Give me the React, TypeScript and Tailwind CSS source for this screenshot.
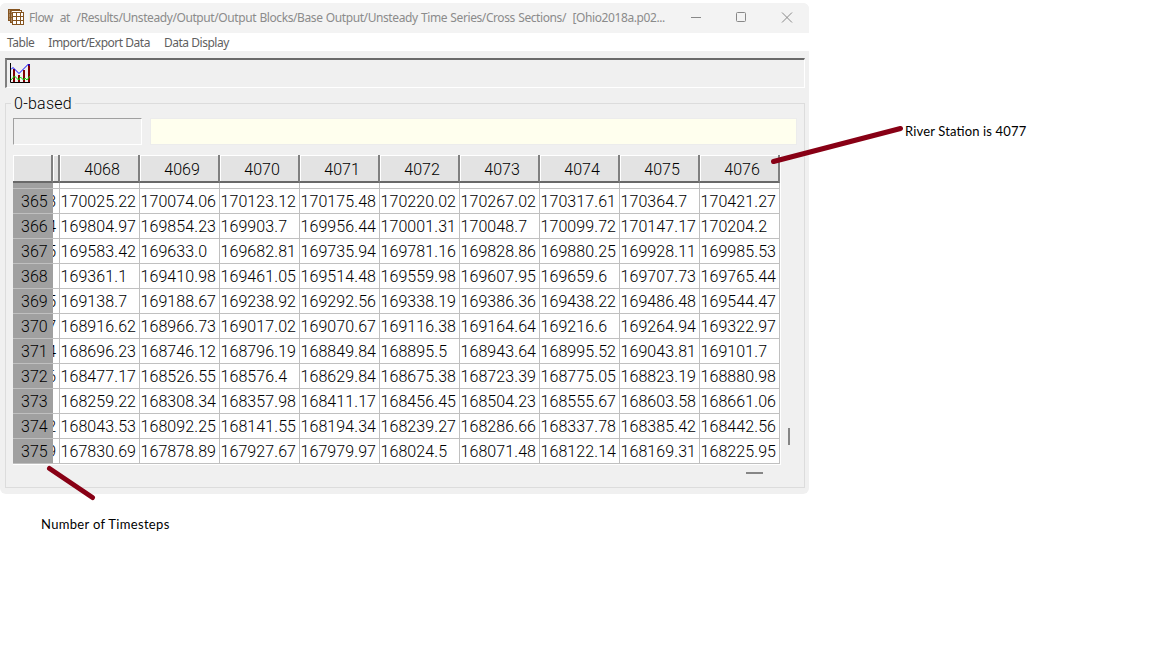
const columns = [4068, 4069, 4070, 4071, 4072, 4073, 4074, 4075, 4076];

// `clipped` is the last digit of the column scrolled under the row header
const rows = [
	{ step: 365, clipped: "3", values: ["170025.22", "170074.06", "170123.12", "170175.48", "170220.02", "170267.02", "170317.61", "170364.7", "170421.27"] },
	{ step: 366, clipped: "4", values: ["169804.97", "169854.23", "169903.7", "169956.44", "170001.31", "170048.7", "170099.72", "170147.17", "170204.2"] },
	{ step: 367, clipped: "5", values: ["169583.42", "169633.0", "169682.81", "169735.94", "169781.16", "169828.86", "169880.25", "169928.11", "169985.53"] },
	{ step: 368, clipped: "", values: ["169361.1", "169410.98", "169461.05", "169514.48", "169559.98", "169607.95", "169659.6", "169707.73", "169765.44"] },
	{ step: 369, clipped: "5", values: ["169138.7", "169188.67", "169238.92", "169292.56", "169338.19", "169386.36", "169438.22", "169486.48", "169544.47"] },
	{ step: 370, clipped: "7", values: ["168916.62", "168966.73", "169017.02", "169070.67", "169116.38", "169164.64", "169216.6", "169264.94", "169322.97"] },
	{ step: 371, clipped: "4", values: ["168696.23", "168746.12", "168796.19", "168849.84", "168895.5", "168943.64", "168995.52", "169043.81", "169101.7"] },
	{ step: 372, clipped: "6", values: ["168477.17", "168526.55", "168576.4", "168629.84", "168675.38", "168723.39", "168775.05", "168823.19", "168880.98"] },
	{ step: 373, clipped: "", values: ["168259.22", "168308.34", "168357.98", "168411.17", "168456.45", "168504.23", "168555.67", "168603.58", "168661.06"] },
	{ step: 374, clipped: "2", values: ["168043.53", "168092.25", "168141.55", "168194.34", "168239.27", "168286.66", "168337.78", "168385.42", "168442.56"] },
	{ step: 375, clipped: "9", values: ["167830.69", "167878.89", "167927.67", "167979.97", "168024.5", "168071.48", "168122.14", "168169.31", "168225.95"] },
];

const TableIcon = () => (
	<svg className="mb-[2px] ml-2 h-[16px] w-[16px] shrink-0" viewBox="0 0 16 16" fill="#fff" stroke="#855420">
		<rect x="0.5" y="0.5" width="11" height="11" />
		<rect x="2.5" y="1.5" width="11" height="12" />
		<rect x="4.5" y="3.5" width="11" height="12" />
		<path d="M8.500 4v11M12.500 4v11M5 7.500h10M5 11.500h10" fill="none" />
		<path d="M1.500 1v10M3.500 2v11M1 4.500h3M1 8.500h3" fill="none" strokeOpacity="0.7" />
	</svg>
);

const ChartIcon = () => (
	<svg className="ml-[3px] mt-[3px] h-[20px] w-[20px]" viewBox="0 0 20 20" fill="none">
		<path d="M4 6v13M9 12v7M14 7v12M19 1v18" stroke="#800000" strokeWidth="2" />
		<path d="M1 6.500l2-2 6 6 9.500-9.500 1.500 2" stroke="#0000ff" />
		<path d="M1 17l3.500-4 4 4 2-3 3 3 1.500-2 2 2 3-4" stroke="#00e000" />
		<path d="M.5 0v19.500H20" stroke="#000" />
	</svg>
);

const TitleBar = () => (
	<div className="flex h-[30px] items-center bg-[#f3f3f3]">
		<TableIcon />
		<span className="ml-[5px] w-[654px] shrink-0 whitespace-pre font-['Noto_Sans'] text-[12px] tracking-[-0.41px] text-[#8b8b8b] [word-spacing:0.6px]">
			{"Flow  at  /Results/Unsteady/Output/Output Blocks/Base Output/Unsteady Time Series/Cross Sections/  [Ohio2018a.p02..."}
		</span>
		<svg className="mt-[-2px] h-[12px] w-[112px] shrink-0" viewBox="0 0 112 12" fill="none" stroke="#888">
			<path d="M8 6.500h10M99 1.500l10 10M109 1.500l-10 10" />
			<rect x="53.5" y="1.5" width="9" height="9" rx="1" />
		</svg>
	</div>
);

const HeaderCell = ({ label }: { label: number }) => (
	<div className="flex h-[28px] w-20 items-center justify-center border-b-2 border-r-2 border-b-[#696969] border-r-[#808080] bg-[#e3e3e3] pl-[6px] pt-1 shadow-[inset_1px_1px_0_#fff]">
		{label}
	</div>
);

const DataTable = () => (
	<div className="ml-[7px] mt-[10px] w-[768px] border-b border-r border-b-white border-r-white bg-white font-[Roboto] text-[16px] font-light leading-[26px] text-black">
		<div className="flex">
			<div className="h-[28px] w-10 border-b-2 border-r-2 border-b-[#696969] border-r-[#808080] bg-[#e3e3e3] shadow-[inset_1px_1px_0_#fff]" />
			<div className="h-[28px] w-[7px] border-b-2 border-r-2 border-b-[#696969] border-r-[#808080] bg-[#e3e3e3] shadow-[inset_1px_1px_0_#fff]" />
			{columns.map((col) => (
				<HeaderCell key={col} label={col} />
			))}
		</div>
		<div className="flex h-[6px]">
			<div className="w-10 border-b border-[#c0c0c0] bg-[#a0a0a0]" />
			<div className="w-[7px] border-b border-r border-[#c0c0c0]" />
			{columns.map((col) => (
				<div key={col} className="w-20 border-b border-r border-[#c0c0c0]" />
			))}
		</div>
		{rows.map((row) => (
			<div key={row.step} className="flex h-[25px]">
				<div className="w-10 border-b border-[#c0c0c0] bg-[#a0a0a0] pl-2">{row.step}</div>
				<div className="flex w-[7px] justify-end overflow-hidden border-b border-r border-[#c0c0c0] pr-[3px]">{row.clipped}</div>
				{row.values.map((value, i) => (
					<div key={i} className="w-20 border-b border-r border-[#c0c0c0] pl-[0.5px] tracking-[0.08px]">{value}</div>
				))}
			</div>
		))}
	</div>
);

const Viewer = () => (
	<div className="mt-[3px] h-[491px] w-[809px] overflow-hidden rounded-b-md rounded-t-md bg-[#f0f0f0]">
		<TitleBar />
		<div className="flex h-[18px] items-center gap-[14px] bg-white pl-[7px] pt-[2px] font-['Noto_Sans'] text-[12px] tracking-[-0.48px] text-[#5f5f5f]">
			<span>Table</span>
			<span>Import/Export Data</span>
			<span>Data Display</span>
		</div>
		<div className="ml-[5px] mt-[7px] h-[30px] w-[800px] border-b border-r border-t-2 border-l-2 border-b-white border-l-[#808080] border-r-white border-t-[#696969]">
			<ChartIcon />
		</div>
		<div className="ml-[5px] mt-[15px] h-[385px] w-[800px] border border-[#dcdcdc]">
			<div className="ml-[5px] mt-[-10px] h-5 w-[64px] bg-[#f0f0f0] pl-[3px] font-[Roboto] text-[16px] font-light leading-5 tracking-[0.25px] text-black">
				0-based
			</div>
			<div className="ml-[7px] mt-1 flex gap-2">
				<div className="h-[27px] w-[129px] border border-b-white border-l-[#a0a0a0] border-r-white border-t-[#a0a0a0]" />
				<div className="h-[27px] w-[647px] border border-[#ececec] bg-[#ffffee]" />
			</div>
			<DataTable />
		</div>
	</div>
);

export default function App() {
	return (
		<div className="relative h-[651px] w-[1155px] overflow-hidden bg-white">
			<Viewer />
			<div className="absolute left-[788px] top-[428px] h-[17px] w-[2px] bg-[#868686]" />
			<div className="absolute left-[746px] top-[472px] h-[2px] w-[17px] bg-[#868686]" />
			<svg className="absolute left-0 top-0 h-[651px] w-[1155px]" viewBox="0 0 1155 651" stroke="#880015" strokeWidth="5" strokeLinecap="round">
				<path d="M773.500 161.500L900.500 128.500M49.500 468.500L92.500 497.500" />
			</svg>
			<span className="absolute left-[905px] top-[121px] whitespace-nowrap font-[Lato] text-[13px] leading-5 tracking-[0.15px] text-black [font-feature-settings:'liga'_1]">River Station is 4077</span>
			<span className="absolute left-[41px] top-[514px] whitespace-nowrap font-[Lato] text-[13px] leading-5 tracking-[0.32px] text-black">Number of Timesteps</span>
		</div>
	);
}
